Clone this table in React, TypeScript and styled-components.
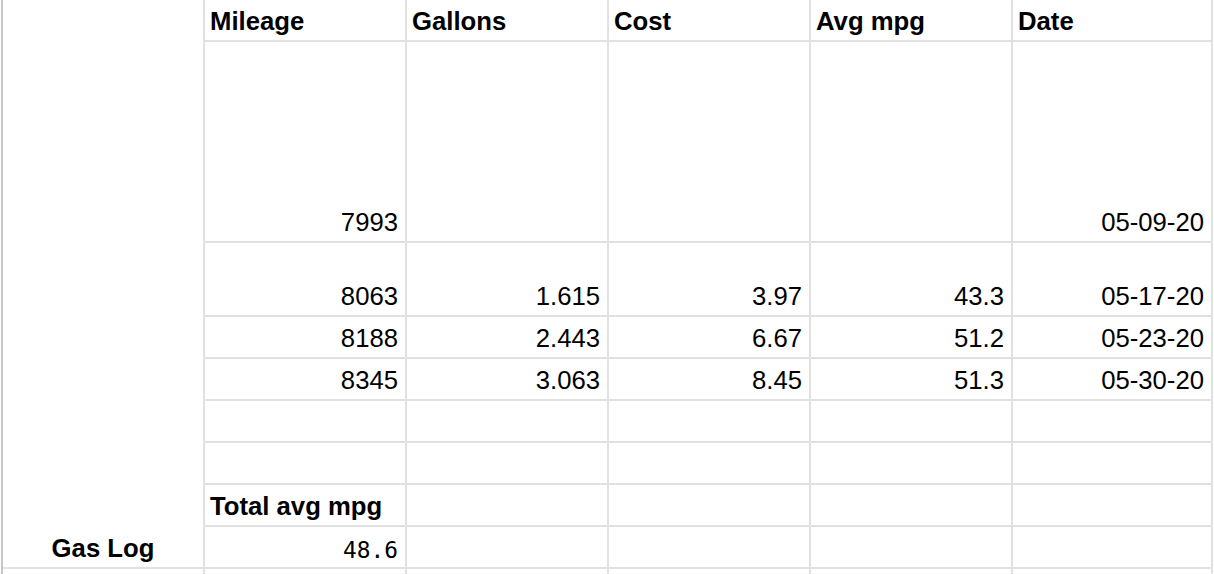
import React from "react";
import styled, { createGlobalStyle } from "styled-components";

const Global = createGlobalStyle`
  html, body { margin: 0; padding: 0; background: #fff; overflow: hidden; }
  body { font-family: "Liberation Sans", Arial, sans-serif; color: #000; }
`;

const Sheet = styled.div`
  display: grid;
  grid-template-columns: 200px repeat(5, 202px);
  grid-template-rows: 42px 201px 74px repeat(6, 42px) 5px;
  margin-left: 1px;
  border-left: 2px solid #c6c6c6;
  width: max-content;
`;

const Cell = styled.div<{ $align?: "left" | "right" | "center"; $bold?: boolean; $mono?: boolean; $last?: boolean; $open?: boolean }>`
  box-sizing: border-box;
  border-left: 2px solid #e1e1e1;
  ${(p) => (p.$open ? "" : "border-bottom: 2px solid #e1e1e1;")}
  ${(p) => (p.$last ? "border-right: 2px solid #e1e1e1;" : "")}
  display: flex;
  align-items: flex-end;
  justify-content: ${(p) => (p.$align === "right" ? "flex-end" : p.$align === "center" ? "center" : "flex-start")};
  padding: 0 7px 4px 5px;
  font-family: ${(p) => (p.$mono ? '"DejaVu Sans Mono", monospace' : '"Liberation Sans", Arial, sans-serif')};
  font-size: ${(p) => (p.$mono ? "22.8px" : "25.7px")};
  font-weight: ${(p) => (p.$bold ? 700 : 400)};
  white-space: nowrap;
  overflow: hidden;
`;

const SideCell = styled.div<{ $ruled?: boolean }>`
  box-sizing: border-box;
  display: flex;
  align-items: flex-end;
  justify-content: center;
  padding-bottom: 4px;
  font-size: 25.7px;
  font-weight: 700;
  ${(p) => (p.$ruled ? "border-bottom: 2px solid #e1e1e1;" : "")}
`;

type CellData = { text?: string; bold?: boolean; mono?: boolean; align?: "left" | "right" };
type Row = { side?: string; sideRuled?: boolean; open?: boolean; cells: CellData[] };

const empty = (): CellData[] => Array.from({ length: 5 }, () => ({}));

const rows: Row[] = [
  {
    cells: ["Mileage", "Gallons", "Cost", "Avg mpg", "Date"].map((t) => ({ text: t, bold: true, align: "left" as const })),
  },
  {
    cells: [{ text: "7993", align: "right" }, {}, {}, {}, { text: "05-09-20", align: "right" }],
  },
  {
    cells: ["8063", "1.615", "3.97", "43.3", "05-17-20"].map((t) => ({ text: t, align: "right" as const })),
  },
  {
    cells: ["8188", "2.443", "6.67", "51.2", "05-23-20"].map((t) => ({ text: t, align: "right" as const })),
  },
  {
    cells: ["8345", "3.063", "8.45", "51.3", "05-30-20"].map((t) => ({ text: t, align: "right" as const })),
  },
  { cells: empty() },
  { cells: empty() },
  { cells: [{ text: "Total avg mpg", bold: true, align: "left" }, {}, {}, {}, {}] },
  { side: "Gas Log", sideRuled: true, cells: [{ text: "48.6", mono: true, align: "right" }, {}, {}, {}, {}] },
  { open: true, cells: empty() },
];

export default function App() {
  return (
    <>
      <Global />
      <Sheet>
        {rows.map((r, i) => (
          <React.Fragment key={i}>
            <SideCell $ruled={r.sideRuled}>{r.side}</SideCell>
            {r.cells.map((c, j) => (
              <Cell key={j} $align={c.align} $bold={c.bold} $mono={c.mono} $last={j === 4} $open={r.open}>
                {c.text}
              </Cell>
            ))}
          </React.Fragment>
        ))}
      </Sheet>
    </>
  );
}
